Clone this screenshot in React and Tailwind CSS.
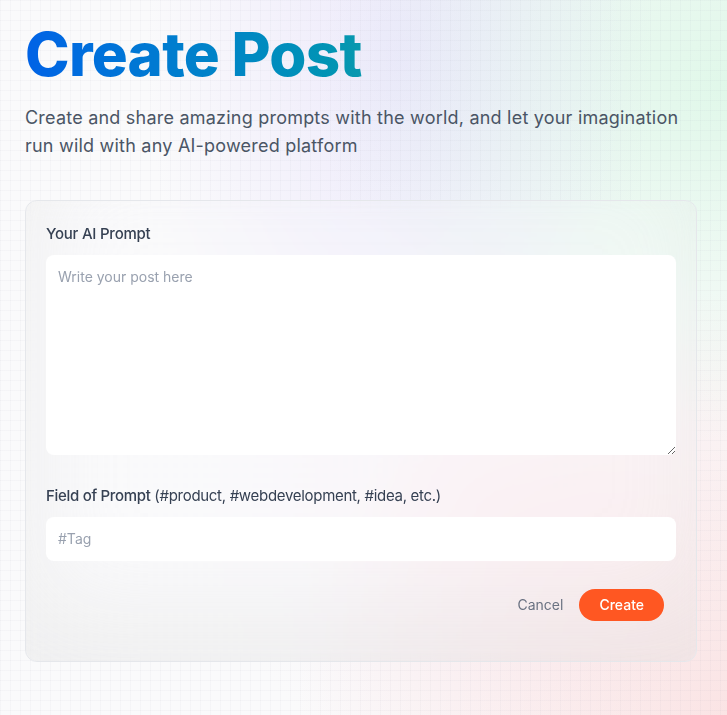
import { useState } from "react";

const CreatePost = () => {
  const [post, setPost] = useState({ prompt: "", tag: "" });

  return (
    <section className="w-full max-w-full flex flex-col items-start">
      <h1 className="text-[60px] font-extrabold leading-[1.15] tracking-[-0.012em] bg-gradient-to-r from-[#0062e6] to-[#0a98ae] bg-clip-text text-transparent">
        Create Post
      </h1>
      <p className="mt-[15px] max-w-2xl text-lg leading-7 tracking-[0.012em] text-gray-600">
        Create and share amazing prompts with the world, and let your
        imagination run wild with any AI-powered platform
      </p>

      <form
        onSubmit={(e) => e.preventDefault()}
        className="mt-10 w-full max-w-2xl flex flex-col gap-7 rounded-xl border border-gray-200 bg-white/20 p-5 shadow-[inset_10px_-50px_94px_0_rgba(199,199,199,0.22)] backdrop-blur"
      >
        <label className="block text-[15px] leading-[26px]">
          <span className="font-medium tracking-[-0.015em] text-gray-700">
            Your AI Prompt
          </span>
          <textarea
            value={post.prompt}
            onChange={(e) => setPost({ ...post, prompt: e.target.value })}
            placeholder="Write your post here"
            className="mt-2 flex h-[200px] w-full rounded-lg bg-white p-3 text-sm leading-5 text-gray-500 outline-0 placeholder:text-gray-400"
          />
        </label>

        <label className="block text-[15px] leading-[26px]">
          <span className="font-medium tracking-[-0.02em] text-gray-700">
            Field of Prompt{" "}
            <span className="font-normal">
              (#product, #webdevelopment, #idea, etc.)
            </span>
          </span>
          <input
            value={post.tag}
            onChange={(e) => setPost({ ...post, tag: e.target.value })}
            placeholder="#Tag"
            className="mt-2 flex w-full rounded-lg bg-white p-3 text-sm leading-5 text-gray-500 outline-0 placeholder:text-gray-400"
          />
        </label>

        <div className="mx-3 mb-5 flex items-center justify-end gap-4">
          <button type="button" className="text-sm text-gray-500">
            Cancel
          </button>
          <button
            type="submit"
            className="rounded-full bg-[#ff5722] px-5 py-1.5 text-sm font-medium text-white"
          >
            Create
          </button>
        </div>
      </form>
    </section>
  );
};

export default function App() {
  return (
    <main
      className="relative min-h-screen w-full overflow-hidden bg-[#fafafb]"
      style={{ fontFamily: "Inter, 'Noto Sans', sans-serif" }}
    >
      <div className="pointer-events-none absolute inset-0 bg-[radial-gradient(ellipse_at_55%_8%,rgba(196,181,253,0.24)_0%,transparent_45%),radial-gradient(ellipse_at_100%_12%,rgba(134,239,172,0.22)_0%,transparent_40%),radial-gradient(ellipse_at_100%_100%,rgba(252,165,165,0.26)_0%,transparent_42%),radial-gradient(ellipse_at_65%_70%,rgba(251,207,232,0.14)_0%,transparent_40%)]" />
      <div className="pointer-events-none absolute inset-0 bg-[linear-gradient(to_right,rgba(120,120,150,0.04)_1px,transparent_1px),linear-gradient(to_bottom,rgba(120,120,150,0.04)_1px,transparent_1px)] bg-[size:10px_10px]" />
      <div className="relative z-10 px-[25px] pt-5 pb-12">
        <CreatePost />
      </div>
    </main>
  );
}
